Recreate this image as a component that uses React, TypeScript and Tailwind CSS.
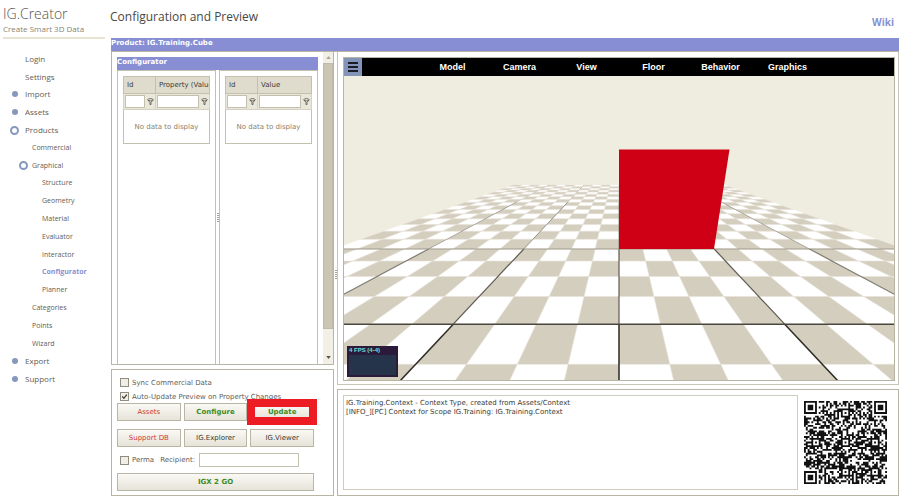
import React, { useState } from 'react';

const navItems = [
  { label: 'Login', level: 0 },
  { label: 'Settings', level: 0 },
  { label: 'Import', level: 0, marker: 'dot' },
  { label: 'Assets', level: 0, marker: 'dot' },
  { label: 'Products', level: 0, marker: 'ring' },
  { label: 'Commercial', level: 1 },
  { label: 'Graphical', level: 1, marker: 'ring' },
  { label: 'Structure', level: 2 },
  { label: 'Geometry', level: 2 },
  { label: 'Material', level: 2 },
  { label: 'Evaluator', level: 2 },
  { label: 'Interactor', level: 2 },
  { label: 'Configurator', level: 2, active: true },
  { label: 'Planner', level: 2 },
  { label: 'Categories', level: 1 },
  { label: 'Points', level: 1 },
  { label: 'Wizard', level: 1 },
  { label: 'Export', level: 0, marker: 'dot' },
  { label: 'Support', level: 0, marker: 'dot' },
];

const levelStyles = ['gap-[2px] pl-[9px] text-[8px]', 'pl-[18px] text-[7px]', 'pl-[28px] text-[7px]'];

const viewerMenu = ['Model', 'Camera', 'View', 'Floor', 'Behavior', 'Graphics'];

const buttonBase =
  'flex h-[18px] items-center justify-center border border-[#bab6a6] bg-linear-to-b from-[#faf9f5] to-[#e6e3d8]';

function Sidebar() {
  return (
    <aside className="w-[105px] shrink-0 pl-[3px] font-['Open_Sans','Noto_Sans',sans-serif] text-[#5f5d55]">
      <div className="border-b-2 border-[#e9e3d3] pt-[5px] pb-[3px]">
        <div className="text-[14px] leading-[18px] font-light text-[#55534c]">IG.Creator</div>
        <div className="text-[8px] leading-[11px] whitespace-nowrap text-[#8a846f]">Create Smart 3D Data</div>
      </div>
      <nav className="mt-[11px] grid h-[338px] auto-rows-fr">
        {navItems.map((item) => (
          <a key={item.label} href="#" className={`flex items-center ${levelStyles[item.level]}`}>
            <span className="flex w-[11px] shrink-0 -translate-x-[3px] justify-center">
              {item.marker === 'dot' && <span className="size-[6px] rounded-full bg-[#8798bd]" />}
              {item.marker === 'ring' && (
                <span className="size-[9px] rounded-full border-2 border-[#8798bd] bg-white" />
              )}
            </span>
            <span className={item.active ? 'font-bold text-[#8890d4]' : ''}>{item.label}</span>
          </a>
        ))}
      </nav>
    </aside>
  );
}

function FilterIcon() {
  return (
    <svg viewBox="0 0 8 8" className="size-[7px] shrink-0" fill="none" stroke="#5f5d55" strokeWidth="1">
      <ellipse cx="4" cy="2" rx="3" ry="1.3" />
      <path d="M1 2.2 L3.4 5 V7.5 H4.6 V5 L7 2.2" />
    </svg>
  );
}

function DataGrid({ name, columns }: { name: string; columns: string[] }) {
  return (
    <table className="w-full table-fixed border-collapse border border-[#c4c0ae] text-left">
      <colgroup>
        <col className="w-[32px]" />
        <col />
      </colgroup>
      <thead>
        <tr className="h-[17px] bg-[#dfdccd] text-[#3c3b36]">
          {columns.map((column) => (
            <th key={column} className="overflow-hidden border border-[#c4c0ae] pl-[3px] font-normal whitespace-nowrap">
              {column}
            </th>
          ))}
        </tr>
      </thead>
      <tbody>
        <tr className="h-[16px] bg-[#e9e6da]">
          {columns.map((column) => (
            <td key={column} className="border border-[#d6d2c3] px-px">
              <div className="flex items-center gap-[2px]">
                <input
                  aria-label={`${name} filter by ${column}`}
                  className="h-[13px] min-w-0 flex-1 border border-[#c4c0ae] bg-white"
                />
                <FilterIcon />
              </div>
            </td>
          ))}
        </tr>
        <tr className="h-[34px]">
          <td colSpan={2} className="text-center text-[#86826f]">
            No data to display
          </td>
        </tr>
      </tbody>
    </table>
  );
}

function Grip() {
  return (
    <div className="flex flex-col gap-px">
      {[0, 1, 2, 3, 4].map((i) => (
        <div key={i} className="h-px w-[2px] bg-[#a5a192]" />
      ))}
    </div>
  );
}

function ConfiguratorPanel() {
  return (
    <section className="flex flex-1 border border-t-0 border-[#b9b5a5] pt-[5px] pl-[5px]">
      <div className="flex min-w-0 flex-1 flex-col">
        <h3 className="h-[13px] bg-[#878ed4] leading-[10px] font-bold text-white">Configurator</h3>
        <div className="flex flex-1 border-x border-[#c4c0ae]">
          <div className="min-w-0 flex-1 border-t border-[#c4c0ae] px-[5px] pt-[5px]">
            <DataGrid name="Properties" columns={['Id', 'Property (Value)']} />
          </div>
          <div className="flex w-[5px] items-center justify-center border-x border-[#c4c0ae]">
            <Grip />
          </div>
          <div className="min-w-0 flex-1 border-t border-[#c4c0ae] px-[5px] pt-[5px]">
            <DataGrid name="Values" columns={['Id', 'Value']} />
          </div>
        </div>
      </div>
      <div className="-mt-[5px] ml-[5px] flex w-[10px] flex-col bg-[#f1efe6]">
        <div className="flex h-[11px] items-center justify-center">
          <svg viewBox="0 0 6 4" className="h-[3px] w-[5px]" fill="#aaa695">
            <path d="M0 4 L3 0 L6 4 Z" />
          </svg>
        </div>
        <div className="flex-1 border border-[#c0bba8] bg-[#cbc6b3]" />
        <div className="flex h-[35px] items-end justify-center pb-[5px]">
          <svg viewBox="0 0 6 4" className="h-[3px] w-[5px]" fill="#55534c">
            <path d="M0 0 L3 4 L6 0 Z" />
          </svg>
        </div>
      </div>
    </section>
  );
}

function Checkbox({ label, defaultChecked = false }: { label: string; defaultChecked?: boolean }) {
  const [checked, setChecked] = useState(defaultChecked);

  return (
    <label className="flex h-[13px] items-center gap-[3px] whitespace-nowrap">
      <span className="relative flex">
        <input
          type="checkbox"
          className="size-[9px] appearance-none border border-[#8f8c80] bg-[#f0eee6]"
          checked={checked}
          onChange={(e) => setChecked(e.target.checked)}
        />
        {checked && (
          <svg
            viewBox="0 0 9 9"
            className="pointer-events-none absolute inset-0 size-[9px]"
            fill="none"
            stroke="#3c3b36"
            strokeWidth="1.3"
          >
            <path d="M2.2 4.3 L3.9 6.3 L6.8 2.6" />
          </svg>
        )}
      </span>
      {label}
    </label>
  );
}

function ActionsPanel() {
  return (
    <section className="border border-[#b9b5a5] px-[5px] pt-[6px] pb-[4px] text-[#5f5d55]">
      <div className="flex flex-col gap-px pl-[3px]">
        <Checkbox label="Sync Commercial Data" />
        <Checkbox label="Auto-Update Preview on Property Changes" defaultChecked />
      </div>
      <div className="mr-[14px]">
        <div className="grid grid-cols-3 gap-x-[3px] gap-y-[8px]">
          <button className={`${buttonBase} text-[#d03a36]`}>Assets</button>
          <button className={`${buttonBase} font-bold text-[#3c8c1e]`}>Configure</button>
          <div className="relative">
            <button className={`${buttonBase} w-full font-bold text-[#3c8c1e]`}>Update</button>
            <div className="pointer-events-none absolute -inset-x-[3px] -inset-y-[4px] border-8 border-[#ed1c24]" />
          </div>
          <button className={`${buttonBase} text-[#d03a36]`}>Support DB</button>
          <button className={`${buttonBase} text-[#3c3b36]`}>IG.Explorer</button>
          <button className={`${buttonBase} text-[#3c3b36]`}>IG.Viewer</button>
        </div>
        <div className="my-[6px] flex items-center pl-[3px]">
          <Checkbox label="Perma" />
          <label htmlFor="recipient" className="ml-[6px]">
            Recipient:
          </label>
          <input id="recipient" className="mr-[15px] ml-[4px] h-[14px] min-w-0 flex-1 border border-[#c4c0ae] bg-white" />
        </div>
        <button className={`${buttonBase} w-full font-bold text-[#3c8c1e]`}>IGX 2 GO</button>
      </div>
    </section>
  );
}

// Perspective floor: rows run away from the camera, columns fan out from the centre line
const HORIZON = 71.5;
const CENTER = 275.5;
const rowY = (row: number) => HORIZON + 1 / (0.009852 - 0.001048 * row);
const columnX = (column: number, y: number) => CENTER + column * 0.2345 * (y - HORIZON);

function Floor() {
  const tiles: string[] = [];
  for (let row = -16; row < 7; row++) {
    const top = rowY(row);
    const bottom = rowY(row + 1);
    for (let col = -12; col < 12; col++) {
      if ((row + col) % 2 !== 0) continue;
      tiles.push(
        `M${columnX(col, top)} ${top}L${columnX(col + 1, top)} ${top}L${columnX(col + 1, bottom)} ${bottom}L${columnX(col, bottom)} ${bottom}Z`
      );
    }
  }
  const far = rowY(-16);
  const near = rowY(7);

  return (
    <svg viewBox="0 0 551 304" preserveAspectRatio="xMidYMid slice" className="block h-full w-full">
      <rect width="551" height="304" fill="#efece0" />
      <path
        d={`M${columnX(-12, far)} ${far}L${columnX(12, far)} ${far}L${columnX(12, near)} ${near}L${columnX(-12, near)} ${near}Z`}
        fill="#fff"
      />
      <path d={tiles.join('')} fill="#d4cebf" stroke="#e7e3d8" strokeWidth="0.6" />
      {[-8, -4, 0, 4, 8].map((col) => {
        // lines get thinner and paler with distance
        const spread = Math.abs(col) === 8 ? 0.6 : 0.8;
        return [[-16, -8], [-8, 0], [0, 4], [4, 7]].map(([a, b], i) => (
          <line
            key={`${col}-${a}`}
            x1={columnX(col, rowY(a))}
            y1={rowY(a)}
            x2={columnX(col, rowY(b))}
            y2={rowY(b)}
            stroke="#1d1a12"
            strokeWidth={0.6 + i * 0.3}
            opacity={spread * (0.25 + i * 0.3)}
          />
        ));
      })}
      <line x1="0" x2="551" y1={rowY(0)} y2={rowY(0)} stroke="#8d8776" strokeWidth="1" opacity="0.8" />
      <line x1="0" x2="551" y1={rowY(4)} y2={rowY(4)} stroke="#4a463d" strokeWidth="1.6" />
      <path d="M275.5 73.5 H386 L370.5 173 H275.5 Z" fill="#cf0015" />
    </svg>
  );
}

function Viewer() {
  return (
    <section className="flex flex-1 flex-col border border-t-0 border-[#c9c5b7] pt-[5px] pr-[3px] pb-[3px] pl-[5px]">
      <div className="flex flex-1 flex-col border border-[#b9b5a5]">
        <div className="flex h-[18px] items-center bg-black font-['Liberation_Sans',sans-serif] text-[9px] font-bold text-white">
          <button aria-label="Menu" className="flex h-full w-[18px] flex-col items-center justify-center gap-[2px] bg-[#8494b8]">
            <span className="h-[2px] w-[10px] bg-[#1b1d26]" />
            <span className="h-[2px] w-[10px] bg-[#1b1d26]" />
            <span className="h-[2px] w-[10px] bg-[#1b1d26]" />
          </button>
          <div className="flex flex-1 justify-center pr-[16px]">
            {viewerMenu.map((item) => (
              <button key={item} className="w-[67px] text-center">
                {item}
              </button>
            ))}
          </div>
        </div>
        <div className="relative flex-1">
          <div className="absolute inset-0">
            <Floor />
          </div>
          <div className="absolute bottom-[3px] left-[3px] flex h-[31px] w-[51px] flex-col bg-[#2b1a3a] px-[2px] pb-[2px] font-['Liberation_Sans',sans-serif] text-[6px] font-bold text-[#6fe0d8]">
            <div className="h-[9px] leading-[9px]">4 FPS (4-4)</div>
            <div className="flex-1 bg-[#26344b]" />
          </div>
        </div>
      </div>
    </section>
  );
}

// Version 7 symbol: 45 modules, finders in three corners, alignment marks at 6 / 22 / 38
const QR_SIZE = 45;

function qrModule(x: number, y: number) {
  const finders = [[3, 3], [41, 3], [3, 41]];
  for (const [fx, fy] of finders) {
    const d = Math.max(Math.abs(x - fx), Math.abs(y - fy));
    if (d <= 4) return d !== 2 && d !== 4;
  }
  const marks = [[22, 6], [6, 22], [22, 22], [38, 22], [22, 38], [38, 38]];
  for (const [mx, my] of marks) {
    const d = Math.max(Math.abs(x - mx), Math.abs(y - my));
    if (d <= 2) return d !== 1;
  }
  if (x === 6 || y === 6) return (x + y) % 2 === 0;
  const n = Math.sin(x * 127.1 + y * 311.7) * 43758.5453;
  return n - Math.floor(n) < 0.53;
}

function QrCode() {
  let d = '';
  for (let y = 0; y < QR_SIZE; y++) {
    for (let x = 0; x < QR_SIZE; x++) {
      if (qrModule(x, y)) d += `M${x} ${y}h1v1h-1z`;
    }
  }
  return (
    <svg viewBox="0 0 45 45" className="size-[83px] shrink-0" role="img" aria-label="QR code">
      <path d={d} fill="#111" />
    </svg>
  );
}

function LogPanel() {
  return (
    <section className="flex h-[107px] border border-[#b9b5a5] py-[5px] pr-[11px] pl-[5px]">
      <div className="flex-1 border border-[#d0ccbe] px-[2px] pt-[3px] leading-[9px] text-[#3c3b36]">
        <p>IG.Training.Context - Context Type, created from Assets/Context</p>
        <p>[INFO_][PC] Context for Scope IG.Training: IG.Training.Context</p>
      </div>
      <div className="ml-[6px] flex items-center">
        <QrCode />
      </div>
    </section>
  );
}

export default function App() {
  return (
    <div className="flex min-h-screen bg-white font-['DejaVu_Sans',sans-serif] text-[7px] leading-[10px]">
      <Sidebar />
      <main className="flex min-w-0 flex-1 flex-col pr-px pl-[6px]">
        <header className="flex h-[38px] justify-between font-['Open_Sans','Noto_Sans',sans-serif]">
          <h1 className="-ml-px pt-[9px] text-[12px] leading-[16px] text-[#4a4841]">Configuration and Preview</h1>
          <a href="#" className="pt-[16px] pr-[5px] text-[10px] leading-[13px] font-bold text-[#8890d4]">
            Wiki
          </a>
        </header>
        <h2 className="h-[14px] border-b border-[#b9b5a5] bg-[#878ed4] leading-[11px] font-bold text-white">
          Product: IG.Training.Cube
        </h2>
        <div className="flex flex-1">
          <div className="flex w-[223px] shrink-0 flex-col gap-[4px]">
            <ConfiguratorPanel />
            <ActionsPanel />
          </div>
          <div className="flex w-[3px] items-center justify-center">
            <Grip />
          </div>
          <div className="flex min-w-0 flex-1 flex-col gap-[4px]">
            <Viewer />
            <LogPanel />
          </div>
        </div>
      </main>
    </div>
  );
}
